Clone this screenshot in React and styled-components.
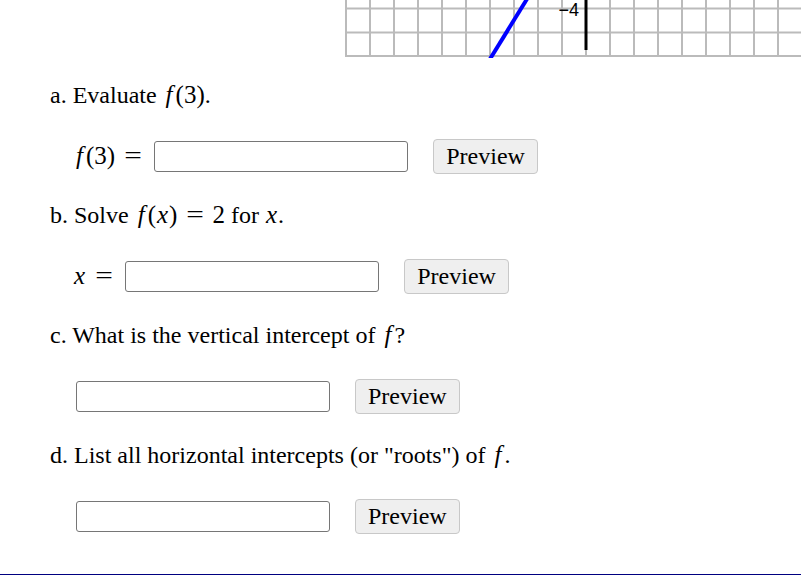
import React from "react";
import styled, { createGlobalStyle } from "styled-components";

const GlobalStyle = createGlobalStyle`
  html, body { margin: 0; padding: 0; background: #fff; }
  body {
    font-family: "Liberation Serif", "Times New Roman", serif;
    color: #000;
  }
`;

const Page = styled.div`
  width: 801px;
  min-height: 576px;
  display: flex;
  flex-direction: column;
  overflow: hidden;
`;

const GraphWrap = styled.div`
  display: flex;
  padding-left: 345px;
  height: 58px;
  overflow: hidden;
`;

const Content = styled.div`
  display: flex;
  flex-direction: column;
  padding-left: 50px;
`;

const QuestionText = styled.p`
  margin: ${(p) => (p.$first ? "22px" : "26px")} 0 0 0;
  font-size: 24px;
  line-height: 30px;
`;

const AnswerRow = styled.div`
  display: flex;
  align-items: center;
  height: 36px;
  margin-top: 28px;
  padding-left: ${(p) => (p.$indent ? "26px" : "23px")};
`;

const Label = styled.span`
  font-size: 24px;
  line-height: 30px;
  margin-right: 4px;
  white-space: nowrap;
`;

const MathSpan = styled.span`
  font-size: 25px;
  line-height: 30px;
  white-space: nowrap;
`;

const V = styled.span`
  font-style: italic;
  display: inline-block;
  padding: ${(p) => (p.$f ? "0 3px 0 3px" : "0 1px 0 1px")};
`;

const Op = styled.span`
  display: inline-block;
  margin: 0 0.42em;
  transform: scaleX(1.25);
`;

const Input = styled.input`
  box-sizing: border-box;
  width: 254px;
  height: 31px;
  border: 1px solid #767676;
  border-radius: 3px;
  background: #fff;
  margin: 0;
  padding: 0 4px;
  font-size: 20px;
`;

const Button = styled.button`
  box-sizing: border-box;
  height: 35px;
  margin-left: 25px;
  padding: 0 12px;
  font-family: "Liberation Serif", "Times New Roman", serif;
  font-size: 24px;
  line-height: 1;
  color: #000;
  background: #efefef;
  border: 1px solid #c8c8c8;
  border-radius: 4px;
`;

const BottomRule = styled.div`
  margin-top: 40px;
  height: 1px;
  width: 100%;
  background: #000080;
`;

function Graph() {
  const verticals = [];
  for (let k = 0; k < 20; k++) verticals.push(1 + 24 * k);
  const horizontals = [8.5, 32.5, 56];
  return (
    <svg width="456" height="58" viewBox="0 0 456 58">
      {verticals.map((x) => (
        <line key={"v" + x} x1={x} y1="0" x2={x} y2="57" stroke="#bbbbbb" strokeWidth="2" />
      ))}
      {horizontals.map((y) => (
        <line key={"h" + y} x1="0" y1={y} x2="456" y2={y} stroke="#bbbbbb" strokeWidth="2" />
      ))}
      <line x1="145" y1="59" x2="182" y2="-1" stroke="#0000ff" strokeWidth="4" />
      <line x1="241" y1="0" x2="241" y2="50" stroke="#000" strokeWidth="3" />
      <text
        x="234"
        y="16"
        textAnchor="end"
        fontFamily="Liberation Sans, Arial, sans-serif"
        fontSize="18"
        fill="#000"
      >
        −4
      </text>
    </svg>
  );
}

export default function App() {
  return (
    <>
      <GlobalStyle />
      <Page>
        <GraphWrap>
          <Graph />
        </GraphWrap>
        <Content>
          <QuestionText $first>
            a. Evaluate{" "}
            <MathSpan>
              <V $f>f</V>(3)
            </MathSpan>
            .
          </QuestionText>
          <AnswerRow>
            <Label>
              <MathSpan>
                <V $f>f</V>(3)<Op>=</Op>
              </MathSpan>
            </Label>
            <Input type="text" />
            <Button type="button">Preview</Button>
          </AnswerRow>

          <QuestionText>
            b. Solve{" "}
            <MathSpan>
              <V $f>f</V>(<V>x</V>)<Op>=</Op>2
            </MathSpan>{" "}
            for{" "}
            <MathSpan>
              <V>x</V>
            </MathSpan>
            .
          </QuestionText>
          <AnswerRow>
            <Label>
              <MathSpan>
                <V>x</V>
                <Op>=</Op>
              </MathSpan>
            </Label>
            <Input type="text" />
            <Button type="button">Preview</Button>
          </AnswerRow>

          <QuestionText>
            c. What is the vertical intercept of{" "}
            <MathSpan>
              <V $f>f</V>
            </MathSpan>
            ?
          </QuestionText>
          <AnswerRow $indent>
            <Input type="text" />
            <Button type="button">Preview</Button>
          </AnswerRow>

          <QuestionText>
            d. List all horizontal intercepts (or "roots") of{" "}
            <MathSpan>
              <V $f>f</V>
            </MathSpan>
            .
          </QuestionText>
          <AnswerRow $indent>
            <Input type="text" />
            <Button type="button">Preview</Button>
          </AnswerRow>
        </Content>
        <BottomRule />
      </Page>
    </>
  );
}
